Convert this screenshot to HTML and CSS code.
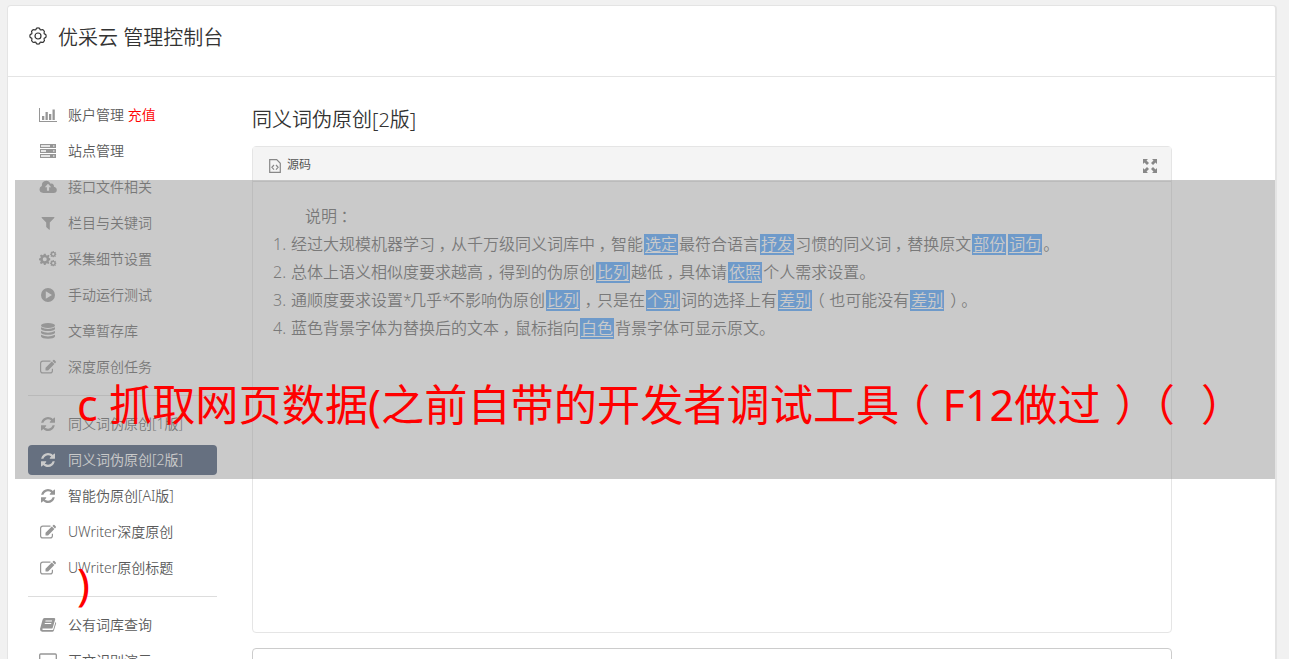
FILE: index.html
```html
<!DOCTYPE html>
<html lang="zh-CN">
<head>
  <meta charset="UTF-8" />
  <meta name="viewport" content="width=device-width, initial-scale=1.0"/>
  <title>优采云 管理控制台</title>
  <link rel="stylesheet" href="styles.css">
</head>
<body>

  <!-- shared icons -->
  <svg class="sprite" width="0" height="0">
    <symbol id="refresh" viewBox="0 0 1536 1536"><path d="M1511 928q0 5-1 7-64 268-268 434.500t-478 166.500q-146 0-282.500-55t-243.500-157l-129 129q-19 19-45 19t-45-19-19-45v-448q0-26 19-45t45-19h448q26 0 45 19t19 45-19 45l-137 137q71 66 161 102t187 36q134 0 250-65t186-179q11-17 53-117 8-23 30-23h192q13 0 22.500 9.500t9.500 22.500zm25-800v448q0 26-19 45t-45 19h-448q-26 0-45-19t-19-45 19-45l138-138q-148-137-349-137-134 0-250 65t-186 179q-11 17-53 117-8 23-30 23h-199q-13 0-22.500-9.500t-9.500-22.500v-7q65-268 270-434.500t480-166.500q146 0 284 55.500t245 156.500l130-129q19-19 45-19t45 19 19 45z"/></symbol>
    <symbol id="edit" viewBox="0 0 18 16"><path fill="none" stroke="currentColor" stroke-width="1.200" d="M11.500 2.100H3.800Q1.600 2.100 1.600 4.300v7.400q0 2.200 2.200 2.200h7.400q2.200 0 2.200-2.200V9.800"/><path d="M6.500 11.500V8.800l6.300-6.300 2.600 2.600L9.100 11.500zM13.400 1.900l.9-.8q.6-.5 1.200 0l1.300 1.300q.5.600 0 1.200l-.8.900z"/></symbol>
    <symbol id="cog" viewBox="-6 -6 12 12"><path fill-rule="evenodd" d="M-1-6h2l.3 1.700 1.200.5L4-4.800 5-3.600 4.100-2.200l.4 1L6-.9v1.900l-1.500.3-.5 1.200.9 1.400L3.700 5l-1.400-.8-1.100.4L.9 6h-1.800l-.3-1.500-1.200-.4L-3.800 5-5 3.800l.8-1.400-.4-1.100L-6 1v-1.900l1.500-.3.4-1.200L-5-3.700-3.800-5l1.500.9 1-.4zM0-2.100a2.100 2.100 0 1 0 0 4.200 2.100 2.100 0 0 0 0-4.200z"/></symbol>
  </svg>

  <div class="panel">
    <div class="panel-header">
      <svg class="gear" viewBox="0 0 18 18" width="18" height="18"><path fill="none" stroke="currentColor" stroke-width="1.200" stroke-linejoin="round" d="M6.900 2.600Q7 .8 9 .8T11.100 2.600L12 3Q13.400 1.900 14.700 3.300T15 6L15.400 6.900Q17.200 7 17.200 9T15.400 11.100L15 12Q16.100 13.400 14.700 14.700T12 15L11.100 15.400Q11 17.200 9 17.200T6.900 15.400L6 15Q4.600 16.100 3.300 14.700T3 12L2.600 11.100Q.8 11 .8 9T2.600 6.900L3 6Q1.900 4.600 3.300 3.300T6 3z"/><circle cx="9" cy="9" r="3" fill="none" stroke="currentColor" stroke-width="1.200"/></svg>
      <h1>优采云 管理控制台</h1>
    </div>

    <div class="panel-body">
      <ul class="sidebar">
        <li><svg class="icon" viewBox="0 0 18 16"><path d="M0 1h1v13h17v1H0zM3 9h2.300v4H3zM6.500 5h2.300v8H6.500zM10 7h2.300v6H10zM13.500 2.500h2.300V13h-2.300z"/></svg>账户管理 <span class="pay">充值</span></li>
        <li><svg class="icon" viewBox="0 0 18 16"><path fill-rule="evenodd" d="M1 1h16v4H1zm1 1.300v1.400h9V2.300zm12 .2v1h1.500v-1zM1 6h16v4H1zm1 1.300v1.400h5V7.300zm12 .2v1h1.500v-1zM1 11h16v4H1zm1 1.300v1.400h9v-1.400zm12 .2v1h1.500v-1z"/></svg>站点管理</li>
        <li><svg class="icon" viewBox="0 0 18 16"><path fill-rule="evenodd" d="M4.300 14Q.5 13.700.5 10.300q0-2.400 2.300-3.400Q2.600 2 7.200 1.800q3 0 4.300 3 2.500-1 3.400 1.600v1.300q2.900.7 2.900 3.200 0 2.800-3.200 3.100zM9 4.800 5.800 8.200h2.100v3.500h2.200V8.200h2.100z"/></svg>接口文件相关</li>
        <li><svg class="icon" viewBox="0 0 18 16"><path d="M2.800 2h12.400q.5.300 0 1L10.800 7.500v7q-.3.500-.9.100L7.200 12V7.500L2.800 3q-.5-.7 0-1z"/></svg>栏目与关键词</li>
        <li><svg class="icon" viewBox="0 0 18 16"><use href="#cog" x="0" y="2.500" width="11.500" height="11.500"/><use href="#cog" x="11" y="0" width="6.500" height="6.500"/><use href="#cog" x="11" y="9" width="6.500" height="6.500"/></svg>采集细节设置</li>
        <li><svg class="icon" viewBox="0 0 18 16"><path fill-rule="evenodd" d="M9 1a7 7 0 1 0 0 14A7 7 0 0 0 9 1zM6.800 4.200 13 8l-6.200 3.800z"/></svg>手动运行测试</li>
        <li><svg class="icon" viewBox="0 0 18 16"><ellipse cx="9" cy="2.500" rx="7" ry="2.500"/><path d="M2 4.300q7 3.400 14 0v1.800q-1 2-7 2t-7-2zM2 8q7 3.400 14 0v1.800q-1 2-7 2t-7-2zM2 11.700q7 3.400 14 0v1.900q-1 2.200-7 2.200t-7-2.200z"/></svg>文章暂存库</li>
        <li><svg class="icon"><use href="#edit"/></svg>深度原创任务</li>
        <li class="divider"></li>
        <li><svg class="icon small"><use href="#refresh"/></svg>同义词伪原创[1版]</li>
        <li class="active"><svg class="icon small"><use href="#refresh"/></svg>同义词伪原创[2版]</li>
        <li><svg class="icon small"><use href="#refresh"/></svg>智能伪原创[AI版]</li>
        <li><svg class="icon"><use href="#edit"/></svg>UWriter深度原创</li>
        <li><svg class="icon"><use href="#edit"/></svg>UWriter原创标题</li>
        <li class="divider"></li>
        <li><svg class="icon" viewBox="0 0 18 16"><path fill-rule="evenodd" d="M5.500 1h9.800q1.200.2.900 1.400l-2.500 8.300q-.3.900-1.300.9H3.600q-1 .8.400 1.500h9.300q.8 0 1-.7l2.200-7.500q.9.600.6 1.600l-2.200 7q-.5 1.300-1.600 1.300H3.300Q.9 14.500 1 12L3.500 3Q4 1 5.500 1zM6.600 3.500l-.3 1h6.500l.3-1zM5.900 6l-.3 1h6.500l.3-1z"/></svg>公有词库查询</li>
        <li><svg class="icon" viewBox="0 0 18 16"><rect x=".7" y="1" width="16.600" height="10.500" rx="1" fill="none" stroke="currentColor" stroke-width="1.300"/><path d="M5 14h8v1H5z"/></svg>正文识别演示</li>
      </ul>

      <div class="main">
        <h2>同义词伪原创[2版]</h2>

        <div class="editor">
          <div class="toolbar">
            <svg width="12" height="14" viewBox="0 0 12 14"><path fill="none" stroke="currentColor" stroke-width="1.200" d="M.7.700h7l3.600 3.600v9H.7zM5 6 2.900 8.300 5 10.600M7 6l2.100 2.300L7 10.600"/></svg>
            <span>源码</span>
            <svg class="expand" width="14" height="14" viewBox="0 0 14 14"><path d="M0 0h5L3.500 1.500 6 4 4 6 1.500 3.500 0 5zM14 0v5l-1.500-1.500L10 6 8 4l2.500-2.500L9 0zM0 14V9l1.500 1.500L4 8l2 2-2.500 2.500L5 14zM14 14H9l1.500-1.500L8 10l2-2 2.500 2.500L14 9z"/></svg>
          </div>
          <div class="content">
            <p class="indent">说明<span class="mark">：</span></p>
            <p><span class="num">1.</span>经过大规模机器学习<span class="mark">，</span>从千万级同义词库中<span class="mark">，</span>智能<u>选定</u>最符合语言<u>抒发</u>习惯的同义词<span class="mark">，</span>替换原文<u>部份</u><u>词句</u>。</p>
            <p><span class="num">2.</span>总体上语义相似度要求越高<span class="mark">，</span>得到的伪原创<u>比列</u>越低<span class="mark">，</span>具体请<u>依照</u>个人需求设置。</p>
            <p><span class="num">3.</span>通顺度要求设置<span class="star">*</span>几乎<span class="star">*</span>不影响伪原创<u>比列</u><span class="mark">，</span>只是在<u>个别</u>词的选择上有<u>差别</u><span class="open">（</span>也可能没有<u>差别</u><span class="close">）</span>。</p>
            <p><span class="num">4.</span>蓝色背景字体为替换后的文本<span class="mark">，</span>鼠标指向<u>白色</u>背景字体可显示原文。</p>
          </div>
        </div>

        <div class="result"></div>
      </div>
    </div>
  </div>

  <div class="mask"></div>
  <div class="caption">c 抓取网页数据(之前自带的开发者调试工具<span class="open">（</span>F12做过<span class="close">）</span><span class="open">（</span><span class="close">）</span><br>)</div>

</body>
</html>
```
FILE: styles.css
```css
* {
  box-sizing: border-box;
}

body {
  margin: 0;
  height: 659px;
  overflow: hidden;
  position: relative;
  background: #f1f1f1;
  font-family: "Noto Sans", "Noto Sans CJK SC", sans-serif;
  color: #5a5a5a;
  text-spacing-trim: space-all;
}

h1, h2, p, ul {
  margin: 0;
  padding: 0;
}

.sprite {
  display: block;
}

svg {
  fill: currentColor;
}

.panel {
  margin: 5px 12px 0 7px;
  height: 654px;
  overflow: hidden;
  background: #fff;
  border: 1px solid #e4e4e4;
  border-right-width: 2px;
  border-bottom: 0;
  border-radius: 4px 4px 0 0;
}

.panel-header {
  display: flex;
  align-items: center;
  height: 71px;
  padding: 0 20px 9px;
  border-bottom: 1px solid #e4e4e4;
  color: #333;
}

.gear {
  margin: -1px 11px 0 1px;
}

h1, h2 {
  font-size: 20px;
  font-weight: 350;
  line-height: 30px;
  color: #333;
}

h1 {
  padding-top: 2px;
}

.panel-body {
  display: flex;
  padding: 23px 0 0 20px;
}

.sidebar {
  width: 189px;
  margin-right: 35px;
  list-style: none;
  font-size: 14px;
  font-weight: 350;
}

.sidebar li {
  display: flex;
  align-items: center;
  height: 30px;
  margin-bottom: 6px;
  padding: 0 0 2px 11px;
  border-radius: 4px;
  white-space: pre;
}

.icon {
  flex: none;
  width: 18px;
  height: 16px;
  margin: 2px 11px 0 0;
  color: #969696;
}

.icon.small {
  width: 14px;
  height: 14px;
  margin: 2px 13px 0 2px;
}

.pay {
  color: #f00;
}

.sidebar .active,
.active .icon {
  color: #fff;
}

.sidebar .active {
  background: #364a6a;
}

.sidebar .divider {
  height: 1px;
  margin: 13px 0;
  padding: 0;
  background: #ddd;
  border-radius: 0;
}

.main {
  width: 920px;
}

h2 {
  margin: 5px 0 11px;
}

.editor {
  height: 487px;
  border: 1px solid #e5e5e5;
  border-radius: 4px;
}

.toolbar {
  display: flex;
  align-items: center;
  height: 35px;
  padding: 3px 14px 0 16px;
  background: #f4f4f4;
  border-bottom: 1px solid #e0e0e0;
  font-size: 12px;
  color: #888;
}

.toolbar span {
  margin-left: 6px;
  color: #555;
  line-height: 18px;
  padding-bottom: 2px;
}

.expand {
  margin-left: auto;
}

.content {
  padding: 20px;
  font-size: 16px;
  font-weight: 350;
  color: #5c5c5c;
}

.content p {
  height: 28px;
  line-height: 28px;
  white-space: nowrap;
}

.content .indent {
  padding-left: 32px;
}

.num {
  display: inline-block;
  width: 18px;
}

.star {
  display: inline-block;
  width: 7px;
}

.content u {
  display: inline-block;
  height: 21px;
  line-height: 20px;
  margin: 0 1px;
  padding: 0 1px;
  background: #469eff;
  color: #fff;
  text-underline-offset: 2px;
}

/* centre the full-width punctuation in its cell */
.mark {
  margin: 0 -.22em 0 .22em;
}

.open {
  margin: 0 .28em 0 -.28em;
}

.close {
  margin: 0 -.32em 0 .32em;
}

.result {
  height: 60px;
  margin-top: 15px;
  border: 1px solid #ccc;
  border-radius: 4px;
}

.mask {
  position: absolute;
  left: 15px;
  top: 180px;
  width: 1260px;
  height: 299px;
  background: rgba(150, 150, 150, .5);
}

.caption {
  position: absolute;
  left: 77px;
  top: 315px;
  font-size: 43.2px;
  line-height: 179px;
  color: #f00;
  white-space: nowrap;
}
```
